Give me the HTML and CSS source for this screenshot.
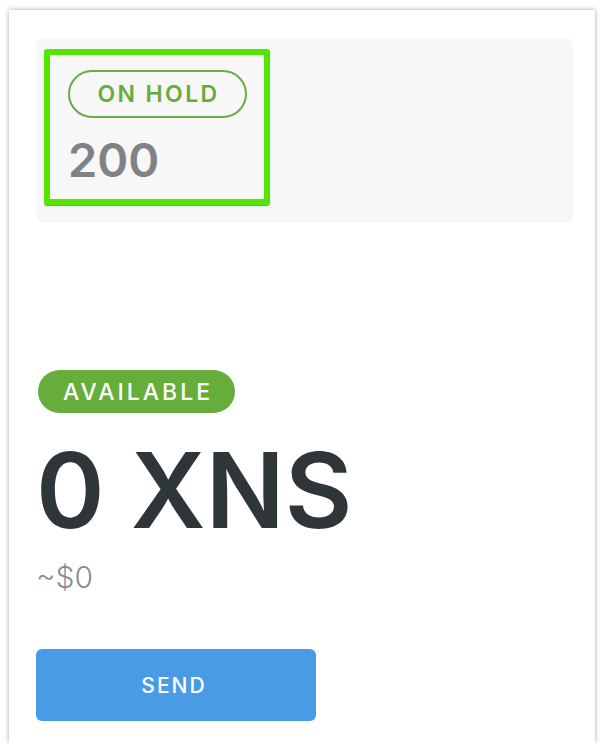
FILE: index.html
```html
<!DOCTYPE html>
<html>
<head>
<meta charset="utf-8">
<link rel="stylesheet" href="styles.css">
</head>
<body>
<div class="card">
  <div class="panel">
    <div class="hold-box">
      <div class="pill-outline">ON HOLD</div>
      <div class="hold-amount">200</div>
    </div>
  </div>
  <div class="available">
    <div class="pill-solid">AVAILABLE</div>
    <div class="balance">0 XNS</div>
    <div class="fiat">~$0</div>
    <button class="send">SEND</button>
  </div>
</div>
</body>
</html>
```

FILE: styles.css
```css
* { box-sizing: border-box; }
body {
  margin: 0;
  background: #ffffff;
  font-family: "Inter", "Open Sans", sans-serif;
}
.card {
  margin: 10px 0 0 9px;
  width: 586px;
  height: 733px;
  background: #fff;
  box-shadow: 0 0 5px rgba(0,0,0,0.35);
  padding: 28px 22px 0 27px;
  display: flex;
  flex-direction: column;
}
.panel {
  height: 185px;
  background: #f7f7f7;
  border-radius: 8px;
  padding: 11px 8px;
}
.hold-box {
  width: 226px;
  height: 156px;
  border: 6px solid #55e600;
  border-radius: 3px;
  box-shadow: 0 1px 1px rgba(60,60,60,0.6);
  padding: 15px 18px 0 18px;
}
.pill-outline {
  width: 179px;
  height: 48px;
  border: 2px solid #6aae42;
  border-radius: 24px;
  color: #67ab3f;
  font-size: 23px;
  font-weight: 600;
  letter-spacing: 2.4px;
  padding-left: 2px;
  display: flex;
  align-items: center;
  justify-content: center;
}
.hold-amount {
  margin-top: 18px;
  font-size: 47px;
  line-height: 48px;
  font-weight: 600;
  color: #808285;
}
.available {
  margin-top: 147px;
  display: flex;
  flex-direction: column;
  align-items: flex-start;
}
.pill-solid {
  margin-left: 2px;
  width: 197px;
  height: 43px;
  border-radius: 22px;
  background: #67ad3b;
  color: #fff;
  font-size: 23px;
  font-weight: 500;
  letter-spacing: 3px;
  padding-left: 3px;
  display: flex;
  align-items: center;
  justify-content: center;
}
.balance {
  margin-top: 22px;
  font-size: 104px;
  line-height: 110px;
  font-weight: 600;
  color: #2f363a;
}
.fiat {
  margin-top: 15px;
  font-size: 30px;
  line-height: 35px;
  font-weight: 300;
  color: #8a8d90;
}
.send {
  margin-top: 54px;
  width: 280px;
  height: 72px;
  border: none;
  border-radius: 6px;
  background: #4a9be5;
  color: #fff;
  font-family: inherit;
  font-size: 21px;
  font-weight: 500;
  letter-spacing: 2px;
  padding-left: 2px;
}
```
